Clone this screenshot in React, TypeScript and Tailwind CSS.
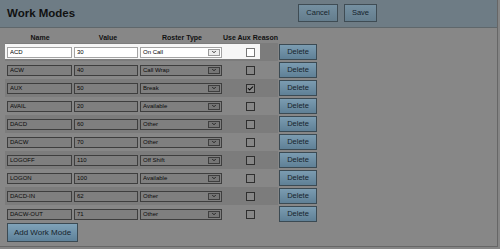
import { Check, ChevronDown } from "lucide-react";

type Mode = { name: string; value: string; roster: string; aux: boolean };

const modes: Mode[] = [
  { name: "ACD", value: "30", roster: "On Call", aux: false },
  { name: "ACW", value: "40", roster: "Call Wrap", aux: false },
  { name: "AUX", value: "50", roster: "Break", aux: true },
  { name: "AVAIL", value: "20", roster: "Available", aux: false },
  { name: "DACD", value: "60", roster: "Other", aux: false },
  { name: "DACW", value: "70", roster: "Other", aux: false },
  { name: "LOGOFF", value: "110", roster: "Off Shift", aux: false },
  { name: "LOGON", value: "100", roster: "Available", aux: false },
  { name: "DACD-IN", value: "62", roster: "Other", aux: false },
  { name: "DACW-OUT", value: "71", roster: "Other", aux: false },
];

function Row({ mode, index }: { mode: Mode; index: number }) {
  const lit = index === 0;
  const stripe = index % 2 === 0 ? "bg-[#7c7c7c]" : "bg-transparent";
  const field = lit
    ? "bg-white border-[#a3a3a3] text-black"
    : "bg-[#7f7f7f] border-[#3e3e3e] text-[#0a0a0a]";

  return (
    <div className="flex h-[18px] items-center">
      <div className={`relative flex h-full w-[273px] items-center ${stripe}`}>
        {lit && <div className="absolute left-0 top-[1px] h-[15px] w-[255px] bg-[#f6f6f6]" />}
        <div className="relative flex w-[68px] pl-[2px]">
          <input
            readOnly
            value={mode.name}
            className={`h-[11px] w-[65px] border px-[2px] text-[6px] outline-none ${field}`}
          />
        </div>
        <div className="relative flex w-[66px] pl-[1px]">
          <input
            readOnly
            value={mode.value}
            className={`h-[11px] w-[64px] border px-[2px] text-[6px] outline-none ${field}`}
          />
        </div>
        <div className="relative flex w-[84px] pl-[1px]">
          <div className={`flex h-[11px] w-[82px] items-center justify-between border pl-[2px] text-[6px] ${field}`}>
            <span>{mode.roster}</span>
            <span
              className={`mr-[1px] flex h-[7px] w-[12px] items-center justify-center border ${
                lit ? "border-[#9a9a9a] bg-[#ececec]" : "border-[#3e3e3e] bg-[#767676]"
              }`}
            >
              <ChevronDown className="h-[6px] w-[6px]" strokeWidth={3} />
            </span>
          </div>
        </div>
        <div className="relative flex w-[55px] justify-center">
          <span
            className={`flex h-[9px] w-[9px] items-center justify-center border ${
              lit ? "border-[#777] bg-white" : "border-[#2f2f2f] bg-[#878787]"
            }`}
          >
            {mode.aux && <Check className="h-[9px] w-[9px] text-black" strokeWidth={3.5} />}
          </span>
        </div>
      </div>
      <div className="flex w-[40px] pl-[1px]">
        <button className="h-[16px] w-[38px] border border-[#3b4a53] bg-[linear-gradient(#7b9cb1,#5f8096)] text-[7.5px] text-[#16232c]">
          Delete
        </button>
      </div>
    </div>
  );
}

export default function App() {
  return (
    <div className="h-[249px] w-[500px] bg-[#858585] font-['Liberation_Sans',Arial,sans-serif]">
      <div className="flex h-[247px] w-[498px] flex-col border-b border-r border-[#666] bg-[#878787]">
        <div className="flex h-[28px] shrink-0 items-start border-b border-[#5f676b] bg-[#6e7c85] pr-[120px]">
          <h1 className="pl-[7px] pt-[7px] text-[11.5px] font-bold leading-[13px] text-[#111]">Work Modes</h1>
          <div className="ml-auto flex gap-[6px] pt-[4px]">
            <button className="h-[18px] w-[40px] border border-[#3f4c54] bg-[linear-gradient(#7590a1,#647d8d)] text-[7.5px] text-[#16232c]">
              Cancel
            </button>
            <button className="h-[18px] w-[33px] border border-[#3f4c54] bg-[linear-gradient(#7590a1,#647d8d)] text-[7.5px] text-[#16232c]">
              Save
            </button>
          </div>
        </div>

        <div className="flex flex-col pl-[5px]">
          <div className="flex h-[15px] items-end pb-[1px] text-[7px] font-bold leading-[8px] text-[#111]">
            <div className="w-[70px] text-center">Name</div>
            <div className="w-[66px] text-center">Value</div>
            <div className="w-[82px] text-center">Roster Type</div>
            <div className="w-[55px] whitespace-nowrap text-center">Use Aux Reason</div>
          </div>
          {modes.map((m, i) => (
            <Row key={m.name} mode={m} index={i} />
          ))}
          <div className="flex pl-[2px]">
            <button className="h-[19px] w-[71px] border border-[#3b4a53] bg-[linear-gradient(#80a3b9,#5e8199)] text-[8px] text-[#16232c]">
              Add Work Mode
            </button>
          </div>
        </div>
      </div>
    </div>
  );
}
